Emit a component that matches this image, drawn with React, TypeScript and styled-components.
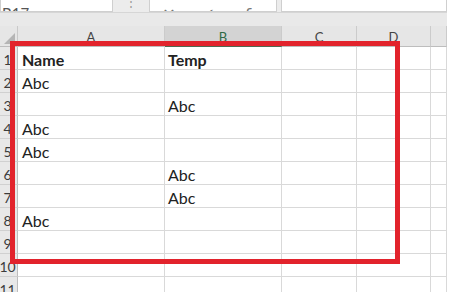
import React from "react";
import styled, { createGlobalStyle } from "styled-components";

const GlobalStyle = createGlobalStyle`
  html, body {
    margin: 0;
    padding: 0;
    background: #ffffff;
    overflow: hidden;
  }
`;

const COLS = [18, 147, 117, 75, 74, 16];
const LETTERS = ["A", "B", "C", "D", ""];

const rows: [string, string][] = [
  ["Name", "Temp"],
  ["Abc", ""],
  ["", "Abc"],
  ["Abc", ""],
  ["Abc", ""],
  ["", "Abc"],
  ["", "Abc"],
  ["Abc", ""],
  ["", ""],
  ["", ""],
  ["", ""],
];

const Page = styled.div`
  position: relative;
  width: 474px;
  height: 292px;
  overflow: hidden;
  background: #ffffff;
  font-family: Lato, "Open Sans", sans-serif;
`;

const Sheet = styled.div`
  width: 447px;
  display: flex;
  flex-direction: column;
`;

const FormulaBar = styled.div`
  height: 13px;
  display: flex;
  background: #ececec;
  border-bottom: 1px solid #d6d6d6;
  box-sizing: border-box;
`;

const Field = styled.div<{ $w: number }>`
  width: ${(p) => p.$w}px;
  height: 12px;
  background: #ffffff;
  border: 1px solid #cfcfcf;
  border-top: none;
  box-sizing: border-box;
  display: flex;
  align-items: flex-end;
  overflow: hidden;
  color: #6a6a6a;
  font-size: 15px;
  line-height: 18px;
`;

const NameText = styled.span`
  padding-left: 1px;
  margin-bottom: -11px;
  color: #555;
`;

const Dots = styled.div`
  width: 36px;
  display: flex;
  justify-content: center;
  align-items: flex-end;
  overflow: hidden;
  height: 12px;
  color: #9a9a9a;
  font-size: 12px;
  line-height: 12px;
  padding-bottom: 4px;
  box-sizing: border-box;
`;

const Gap = styled.div<{ $w: number }>`
  width: ${(p) => p.$w}px;
`;

const Glyph = styled.span<{ $w: number }>`
  width: ${(p) => p.$w}px;
  text-align: center;
  margin-bottom: -13px;
  color: #777;
  font-size: 16px;
  font-family: "DejaVu Sans", sans-serif;
`;

const Band = styled.div`
  height: 13px;
  background: #e9e9e9;
`;

const Grid = styled.div`
  display: grid;
  grid-template-columns: ${COLS.map((c) => c + "px").join(" ")};
  grid-auto-rows: auto;
`;

const Corner = styled.div`
  height: 21px;
  background: #e6e6e6;
  border-right: 1px solid #c9c9c9;
  border-bottom: 1px solid #bdbdbd;
  box-sizing: border-box;
  display: flex;
  align-items: flex-end;
  justify-content: flex-end;
`;

const ColHead = styled.div<{ $sel?: boolean }>`
  height: 21px;
  box-sizing: border-box;
  background: ${(p) => (p.$sel ? "#d3d3d3" : "#e6e6e6")};
  border-right: 1px solid #cbcbcb;
  border-bottom: ${(p) => (p.$sel ? "2px solid #4d6b52" : "1px solid #bdbdbd")};
  color: ${(p) => (p.$sel ? "#2f6a45" : "#444")};
  font-size: 13px;
  display: flex;
  align-items: center;
  justify-content: center;
  padding-top: 2px;
`;

const RowHead = styled.div`
  height: 23px;
  box-sizing: border-box;
  background: #e8e8e8;
  border-right: 1px solid #bdbdbd;
  border-bottom: 1px solid #d0d0d0;
  color: #3c3c3c;
  font-size: 14px;
  display: flex;
  align-items: flex-end;
  justify-content: center;
  padding-bottom: 1px;
  padding-right: 2px;
`;

const Cell = styled.div<{ $bold?: boolean; $pad: number }>`
  height: 23px;
  box-sizing: border-box;
  border-right: 1px solid #d9d9d9;
  border-bottom: 1px solid #d9d9d9;
  color: #222;
  font-size: 16px;
  font-weight: ${(p) => (p.$bold ? 700 : 400)};
  display: flex;
  align-items: flex-end;
  padding-left: ${(p) => p.$pad}px;
  padding-bottom: 0px;
  line-height: 18px;
`;

const Highlight = styled.div`
  position: absolute;
  left: 10px;
  top: 41px;
  width: 390px;
  height: 223px;
  box-sizing: border-box;
  border: 5px solid #e2232c;
  pointer-events: none;
`;

const App = () => {
  return (
    <Page>
      <GlobalStyle />
      <Sheet>
        <FormulaBar>
          <Field $w={113}>
            <NameText>B17</NameText>
          </Field>
          <Dots>⋮</Dots>
          <Field $w={128}>
            <Gap $w={12} />
            <Glyph $w={14}>✕</Glyph>
            <Gap $w={26} />
            <Glyph $w={12}>✓</Glyph>
            <Gap $w={30} />
            <Glyph $w={14}>
              <i>fx</i>
            </Glyph>
          </Field>
          <Gap $w={4} />
          <Field $w={166} />
        </FormulaBar>
        <Band />
        <Grid>
          <Corner>
            <svg width="14" height="14" viewBox="0 0 14 14">
              <polygon points="12,1 12,12 1,12" fill="#b5b5b5" />
            </svg>
          </Corner>
          {LETTERS.map((l, i) => (
            <ColHead key={i} $sel={l === "B"}>
              {l}
            </ColHead>
          ))}
          {rows.map((r, i) => (
            <React.Fragment key={i}>
              <RowHead>{i + 1}</RowHead>
              <Cell $bold={i === 0} $pad={4}>
                {r[0]}
              </Cell>
              <Cell $bold={i === 0} $pad={3}>
                {r[1]}
              </Cell>
              <Cell $pad={3} />
              <Cell $pad={3} />
              <Cell $pad={3} />
            </React.Fragment>
          ))}
        </Grid>
      </Sheet>
      <Highlight />
    </Page>
  );
};

export default App;
